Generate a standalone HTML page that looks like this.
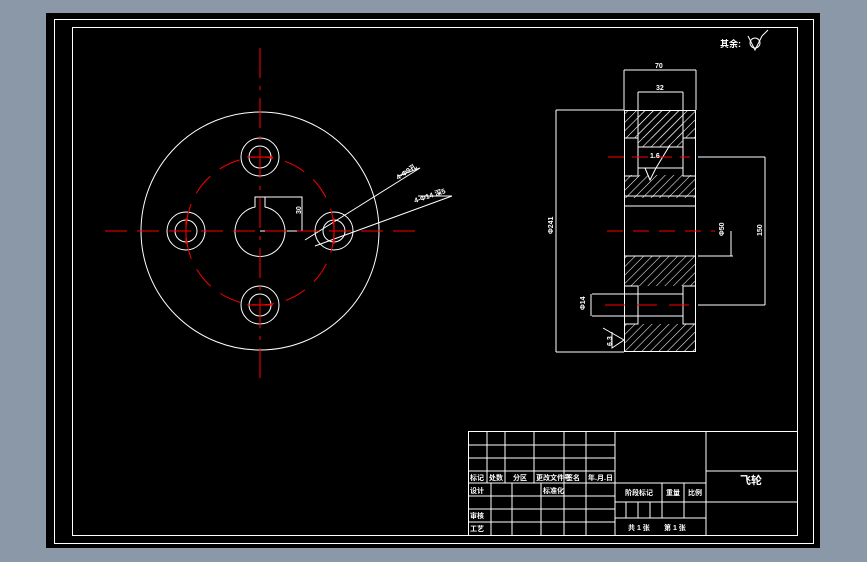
<!DOCTYPE html>
<html><head><meta charset="utf-8"><style>
html,body{margin:0;padding:0;width:867px;height:562px;overflow:hidden;background:#8a98a8}
svg{display:block}
text{font-family:"Liberation Sans","Noto Sans CJK SC",sans-serif;fill:#fff;font-weight:bold}
</style></head><body>
<svg width="867" height="562" viewBox="0 0 867 562" xmlns="http://www.w3.org/2000/svg">
<defs>
<pattern id="h" width="6" height="6" patternUnits="userSpaceOnUse" patternTransform="rotate(45)"><line x1="0" y1="0" x2="0" y2="6" stroke="#fff" stroke-width="1.1"/></pattern>
</defs>
<rect x="46" y="13" width="774" height="535" fill="#000"/>
<g fill="none" stroke="#fff" stroke-width="1">
<rect x="54.5" y="19.5" width="759" height="524"/>
<rect x="72.5" y="27.5" width="725" height="508"/>
</g>
<g fill="none" stroke="#fff" stroke-width="1">
<circle cx="260" cy="231" r="119"/>
<circle cx="260" cy="157" r="19"/><circle cx="260" cy="157" r="11"/>
<circle cx="260" cy="305" r="19"/><circle cx="260" cy="305" r="11"/>
<circle cx="186" cy="231" r="19"/><circle cx="186" cy="231" r="11"/>
<circle cx="334" cy="231" r="19"/><circle cx="334" cy="231" r="11"/>
<path d="M255 207 A25 25 0 1 0 265 207 L265 197 L255 197 Z"/>
<path d="M265 197 H302 V231 H260"/>
<path d="M305 240 L420 168 M315 246 L452 196 M398 176 L420 168 M418 196 L452 196" />
</g>
<g stroke="#f00" stroke-width="1" fill="none">
<circle cx="260" cy="231" r="74" stroke-dasharray="22 12"/>
<line x1="260" y1="48" x2="260" y2="380" stroke-dasharray="30 8 4 8"/>
<line x1="105" y1="231" x2="415" y2="231" stroke-dasharray="22 10"/>
<line x1="247" y1="157" x2="273" y2="157"/><line x1="247" y1="305" x2="273" y2="305"/>
<line x1="186" y1="218" x2="186" y2="244"/><line x1="334" y1="218" x2="334" y2="244"/>
</g>
<text x="297" y="218" font-size="7" transform="rotate(-90 297 214)">30</text>
<text x="398" y="180" font-size="7" transform="rotate(-33 398 180)">4-Φ9孔</text>
<text x="415" y="203" font-size="7" transform="rotate(-18 415 203)">4-Φ14 深5</text>
<rect x="624" y="110" width="72" height="28" fill="url(#h)"/>
<rect x="624" y="175" width="72" height="23" fill="url(#h)"/>
<rect x="624" y="256" width="72" height="30" fill="url(#h)"/>
<rect x="624" y="324" width="72" height="28" fill="url(#h)"/>
<rect x="638" y="110" width="45" height="37" fill="url(#h)"/>
<g fill="none" stroke="#fff" stroke-width="1">
<rect x="624.5" y="110.5" width="71" height="241"/>
<path d="M624 138 H638 V176 H624 M696 138 H683 V176 H696"/>
<path d="M638 110 V147 H683 V110 M638 168 H683"/>
<path d="M624 196 H696 M624 206 H696 M624 256 H696"/>
<path d="M624 286 H638 V324 H624 M696 286 H683 V324 H696"/>
<path d="M592 294 H683 M592 316 H683"/>
<path d="M624 70 V110 M696 70 V110 M624 70 H696 M638 92 V110 M683 92 V110 M638 92 H683"/>
<path d="M556 110 H624 M556 352 H624 M556 110 V352"/>
<path d="M698 157 H765 M698 305 H765 M765 157 V305"/>
<path d="M698 256 H733 M731 231 V256"/>
<path d="M591 294 V316"/>
<path d="M650 168 L656 168 L650 180 L645 168 M656 168 L670 145"/>
<path d="M603 328 L624 340 L612 348 V332"/>
</g>
<g stroke="#f00" stroke-width="1">
<line x1="608" y1="157" x2="690" y2="157" stroke-dasharray="16 8"/>
<line x1="607" y1="231" x2="715" y2="231" stroke-dasharray="16 10"/>
<line x1="605" y1="305" x2="690" y2="305" stroke-dasharray="20 12"/>
</g>
<g font-size="7">
<text x="655" y="68">70</text><text x="656" y="90">32</text>
<text x="650" y="158">1.6</text>
<text x="553" y="234" transform="rotate(-90 553 234)">Φ241</text>
<text x="762" y="236" transform="rotate(-90 762 236)">150</text>
<text x="724" y="236" transform="rotate(-90 724 236)">Φ50</text>
<text x="585" y="310" transform="rotate(-90 585 310)">Φ14</text>
<text x="612" y="346" transform="rotate(-90 612 346)">6.3</text>
</g>
<text x="720" y="47" font-size="9">其余:</text>
<path d="M748 36 L755 50 L762 36 M768 30 L762 36" stroke="#fff" fill="none"/>
<circle cx="755" cy="43" r="5" stroke="#fff" fill="none"/>
<g fill="none" stroke="#fff" stroke-width="1">
<rect x="468.5" y="431.5" width="329" height="104"/>
<path d="M468 445H615 M468 458H615 M468 471H615 M468 483H615 M468 496H615 M468 509H615 M468 522H615"/>
<path d="M487 431V483 M505 431V483 M534 431V483 M564 431V535 M586 431V535 M615 431V535 M706 431V535"/>
<path d="M491 483V535 M512 483V535 M541 483V535"/>
<path d="M615 483H706 M615 502H706 M615 518H706 M662 483V518 M684 483V518 M626 502V518 M638 502V518 M650 502V518"/>
<path d="M706 471H797 M706 502H797"/>
</g>
<g font-size="7">
<text x="470" y="480">标记</text><text x="489" y="480">处数</text><text x="513" y="480">分区</text><text x="536" y="480">更改文件号</text><text x="566" y="480">签名</text><text x="588" y="480">年.月.日</text>
<text x="470" y="493">设计</text><text x="543" y="493">标准化</text>
<text x="470" y="518">审核</text><text x="470" y="531">工艺</text>
<text x="625" y="495">阶段标记</text><text x="666" y="495">重量</text><text x="688" y="495">比例</text>
<text x="628" y="530">共 1 张</text><text x="664" y="530">第 1 张</text>
</g>
<text x="740" y="484" font-size="11">飞轮</text>
</svg>
</body></html>
